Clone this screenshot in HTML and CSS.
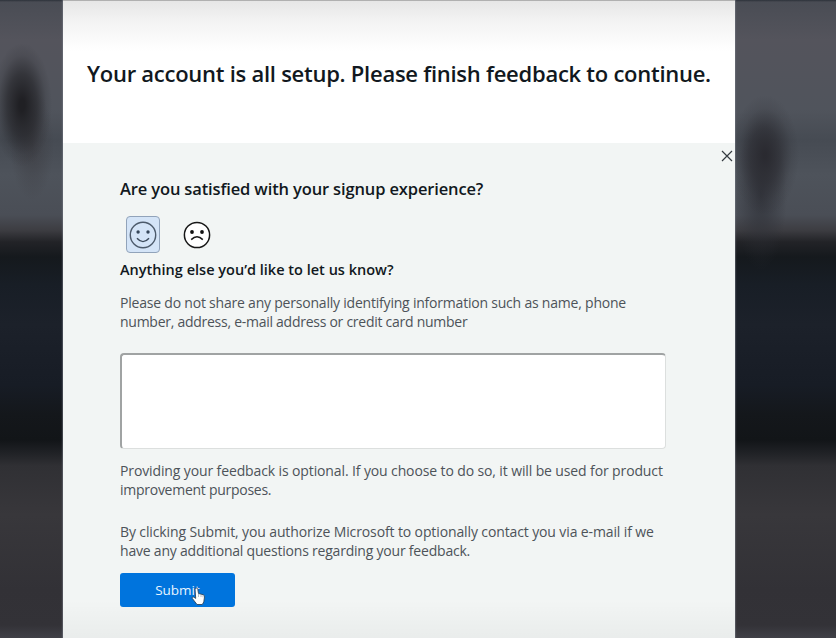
FILE: index.html
```html
<!DOCTYPE html>
<html lang="en">
<head>
<meta charset="utf-8">
<title>Signup feedback</title>
<link rel="stylesheet" href="styles.css">
</head>
<body>
<main class="panel">
  <header class="panel-header">
    <h1>Your account is all setup. Please finish feedback to continue.</h1>
  </header>
  <section class="feedback">
    <button class="close" aria-label="Close">
      <svg width="12" height="12" viewBox="0 0 12 12"><path d="M1 1l10 10M11 1L1 11" fill="none" stroke="#343a40" stroke-width="1.2"/></svg>
    </button>
    <h2>Are you satisfied with your signup experience?</h2>
    <div class="ratings">
      <button class="rating selected" aria-label="Satisfied">
        <svg width="28" height="28" viewBox="0 0 28 28"><circle cx="14" cy="14" r="12.7" fill="none" stroke="#4c5a6b" stroke-width="1.4"/><circle cx="9.1" cy="11" r="1.7" fill="#35465a"/><circle cx="19" cy="11" r="1.7" fill="#35465a"/><path d="M8 17.2q6 6.8 12 0" fill="none" stroke="#3d4b5c" stroke-width="1.4"/></svg>
      </button>
      <button class="rating" aria-label="Dissatisfied">
        <svg width="28" height="28" viewBox="0 0 28 28"><circle cx="14" cy="14" r="12.6" fill="#fff" stroke="#171717" stroke-width="1.5"/><circle cx="9" cy="11" r="1.9" fill="#111"/><circle cx="19" cy="11" r="1.9" fill="#111"/><path d="M8.2 18.6q5.8-5.6 11.6 0" fill="none" stroke="#171717" stroke-width="1.5"/></svg>
      </button>
    </div>
    <h3>Anything else you’d like to let us know?</h3>
    <p class="privacy"><span class="snug">Please do not share any personally identifying information such as name, phone</span><br><span class="tight">number, address, e-mail address or credit card number</span></p>
    <textarea aria-label="Feedback"></textarea>
    <p class="optional"><span class="open">Providing your feedback is optional. If you choose to do so, it will be used for product</span><br><span class="tight">improvement purposes.</span></p>
    <p class="consent"><span class="open">By clicking Submit, you authorize Microsoft to optionally contact you via e-mail if we</span><br><span class="snug">have any additional questions regarding your feedback.</span></p>
    <button class="submit"><span>Submit</span>
      <svg class="pointer" width="15" height="19" viewBox="0 0 15 19"><path d="M4 1.5q2-1.5 2.8.7l.7 4.3 4.7 1.2q1.5.5 1.3 2.2l-.7 5-1.5 2.6H6L1.2 11.3q-.6-1.7 1.5-1.2l2 1.3z" fill="#fff" stroke="#30465c" stroke-width=".9"/><path d="M7.5 7v3M10 7.5V10M12 8.2V10.3" stroke="#8795a5" stroke-width=".6"/></svg>
    </button>
  </section>
</main>
</body>
</html>
```

FILE: styles.css
```css
* { box-sizing: border-box; }

body {
  margin: 0;
  height: 638px;
  overflow: hidden;
  font-family: "Open Sans", "Noto Sans", sans-serif;
  background:
    linear-gradient(rgba(25, 32, 40, .6), transparent 2px),
    radial-gradient(ellipse 30px 62px at 22px 105px, #202024 10%, rgba(32, 32, 36, .6) 50%, rgba(32, 32, 36, .15) 80%, transparent),
    radial-gradient(ellipse 22px 55px at 32px 145px, rgba(58, 57, 62, .6), transparent),
    radial-gradient(ellipse 34px 60px at 765px 155px, rgba(41, 41, 47, .95) 5%, rgba(41, 41, 47, .6) 45%, rgba(41, 41, 47, .15) 78%, transparent),
    radial-gradient(ellipse 26px 75px at 761px 195px, rgba(45, 47, 54, .75), rgba(45, 47, 54, .3) 60%, transparent),
    linear-gradient(#494c54 0, #54545c 40px, #50545c 110px, #464b53 140px, #4e535b 175px, #4a4e56 215px, #3d3d42 230px, #222327 242px, #15191d 257px, #181e26 285px, #1c212a 325px, #171c25 385px, #14171b 415px, #121518 440px, #202226 453px, #303034 466px, #38373b 515px, #323136 590px, #333237 625px, #404047 638px);
}

.panel {
  width: 672px;
  height: 638px;
  margin-left: 63px;
  background: linear-gradient(transparent 600px, rgba(0, 0, 0, .035)), #f2f5f4;
  box-shadow: 0 0 1px 1px rgba(117, 123, 132, .45);
}

.panel-header {
  height: 143px;
  padding: 55px 0 0 24px;
  border-top: 1px solid #b0b0b0;
  background: linear-gradient(#e6e6e6, #f3f3f3 20px, #fff 50px);
}

h1, h2, h3, p { margin: 0; white-space: nowrap; }
h1, h2, h3 { color: #111820; font-weight: 600; }
h1 { font-size: 22px; line-height: 34px; letter-spacing: -.26px; }

.feedback {
  position: relative;
  display: flex;
  flex-direction: column;
  align-items: flex-start;
  padding: 34px 0 0 57px;
}

button { padding: 0; border: 0; background: none; font-family: inherit; }
svg { display: block; }
.close { position: absolute; top: 7px; right: 2px; }

h2 { font-size: 16.5px; line-height: 24px; letter-spacing: -.14px; }

.ratings { display: flex; gap: 20px; margin: 15px 0 0 6px; }

.rating {
  display: grid;
  place-items: center;
  width: 34px;
  height: 37px;
  border: 1px solid transparent;
  border-radius: 4px;
}

.rating.selected {
  border: 1.5px solid #91a3ba;
  background: #d4e4f7;
}

h3 { margin-top: 6px; font-size: 14.5px; line-height: 22px; letter-spacing: .01px; }

p { color: #4d5359; font-size: 14px; line-height: 19px; }
.open { letter-spacing: -.12px; }
.snug { letter-spacing: -.21px; }
.tight { letter-spacing: -.265px; }
.privacy { margin-top: 12px; }

textarea {
  width: 546px;
  height: 96px;
  margin-top: 22px;
  border: 1px solid #dcdfde;
  border-top: 2px solid #a0a3a3;
  border-left: 2px solid #a0a3a3;
  border-radius: 4px;
  background: #fff;
  resize: none;
}

.optional { margin-top: 12px; }
.consent { margin-top: 23px; }

.submit {
  position: relative;
  width: 115px;
  height: 34px;
  margin-top: 13px;
  border-radius: 3px;
  background: #0074dd;
  color: #e8f4ff;
  font-size: 13.5px;
  line-height: 34px;
}

.pointer { position: absolute; top: 14px; left: 71px; }
```
